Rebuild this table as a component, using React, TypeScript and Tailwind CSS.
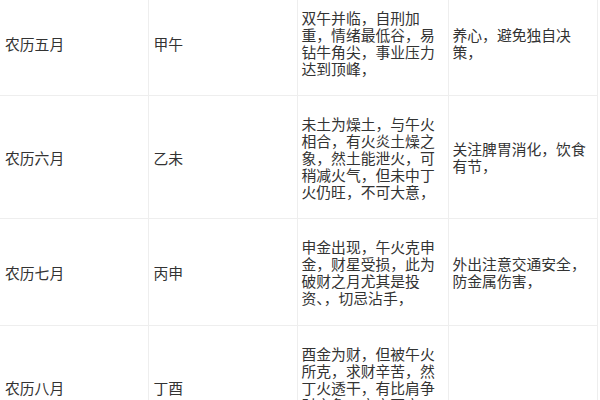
import React from "react";

const rows = [
  {
    month: "农历五月",
    gz: "甲午",
    desc: "双午并临，自刑加重，情绪最低谷，易钻牛角尖，事业压力达到顶峰，",
    tip: "养心，避免独自决策，",
    h: "h-[105px]",
  },
  {
    month: "农历六月",
    gz: "乙未",
    desc: "未土为燥土，与午火相合，有火炎土燥之象，然土能泄火，可稍减火气，但未中丁火仍旺，不可大意，",
    tip: "关注脾胃消化，饮食有节，",
    h: "h-[123px]",
  },
  {
    month: "农历七月",
    gz: "丙申",
    desc: "申金出现，午火克申金，财星受损，此为破财之月尤其是投资、，切忌沾手，",
    tip: "外出注意交通安全，防金属伤害，",
    h: "h-[107px]",
  },
  {
    month: "农历八月",
    gz: "丁酉",
    desc: "酉金为财，但被午火所克，求财辛苦，然丁火透干，有比肩争财之象，宜守不宜攻，",
    tip: "",
    h: "h-[123px]",
  },
];

export default function App() {
  return (
    <div
      className="w-[600px] h-[400px] overflow-hidden bg-white text-[#333333]"
      style={{ fontFamily: '"Noto Sans CJK SC", "Noto Sans", sans-serif' }}
    >
      <table className="-mt-[10px] border-collapse table-fixed w-[597px] text-[14.8px] leading-[17px]">
        <colgroup>
          <col className="w-[148px]" />
          <col className="w-[149px]" />
          <col className="w-[151px]" />
          <col className="w-[149px]" />
        </colgroup>
        <tbody>
          {rows.map((r) => (
            <tr key={r.month} className={r.h}>
              <td className="border border-[#eeeeee] border-l-0 align-middle pl-[5px] pr-[4px]">{r.month}</td>
              <td className="border border-[#eeeeee] align-middle pl-[5px] pr-[4px]">{r.gz}</td>
              <td className="border border-[#eeeeee] align-middle pl-[4px] pr-[3px] break-all">{r.desc}</td>
              <td className="border border-[#eeeeee] align-middle pl-[4px] pr-[3px] break-all">{r.tip}</td>
            </tr>
          ))}
        </tbody>
      </table>
    </div>
  );
}
